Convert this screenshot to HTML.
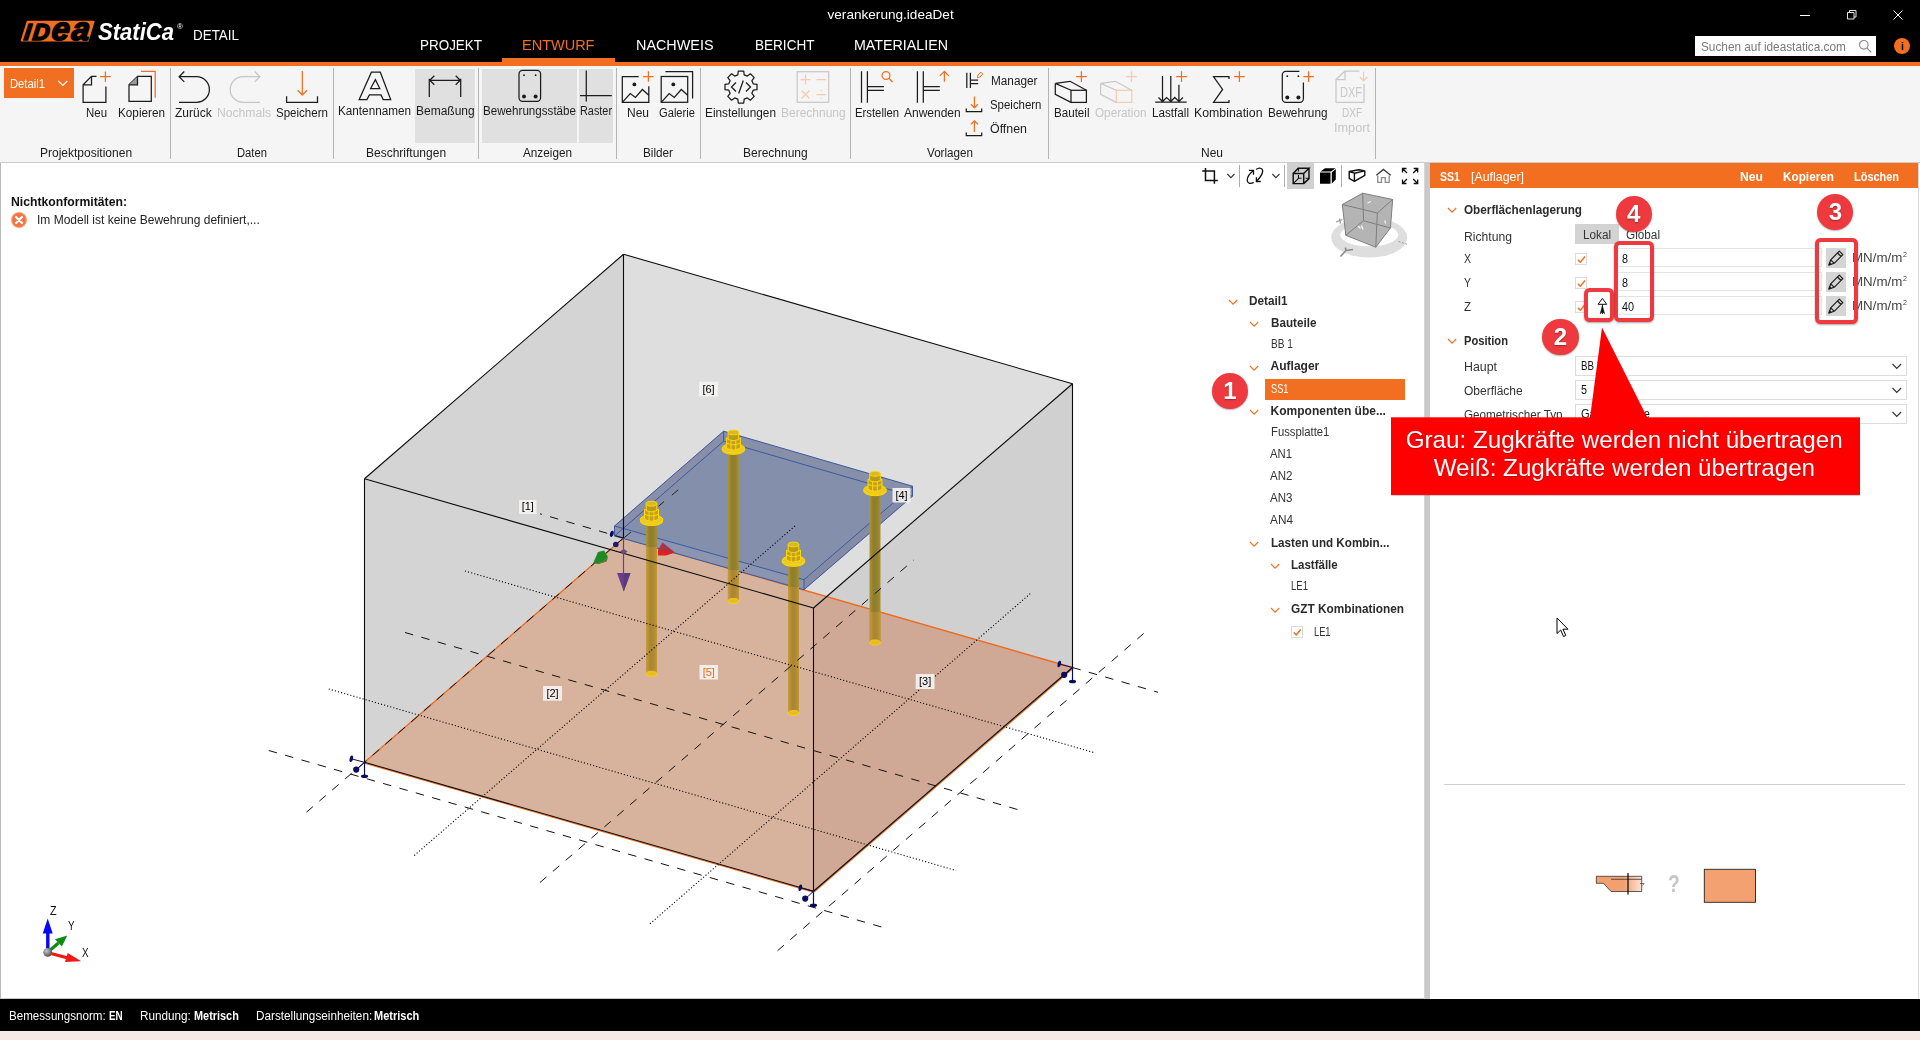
<!DOCTYPE html>
<html lang="de"><head><meta charset="utf-8"><title>verankerung.ideaDet</title>
<style>
html,body{margin:0;padding:0}
body{width:1920px;height:1040px;position:relative;overflow:hidden;background:#fff;font-family:"Liberation Sans",sans-serif;}
.t{position:absolute;white-space:nowrap;line-height:1;transform-origin:0 0;}
.b{position:absolute;}
svg{position:absolute;overflow:visible}
.L{position:absolute;left:0;top:0;width:1920px;height:1040px;}
.X{will-change:transform;}
</style></head>
<body>
<div class="L" id="s0">
<div class="b" style="left:0px;top:0px;width:1920px;height:62px;background:#000;"></div>
<div class="b" style="left:0px;top:62px;width:1920px;height:4px;background:#f26f21;"></div>
<div class="b" style="left:0px;top:66px;width:1920px;height:96px;background:#f5f5f5;"></div>
<div class="b" style="left:0px;top:162px;width:1920px;height:1px;background:#c9cdd0;"></div>
<div class="b" style="left:502px;top:58px;width:113px;height:4px;background:#f26f21;"></div>
<svg style="left:0;top:0" width="200" height="62" viewBox="0 0 200 62"><polygon points="27.500,21.600 93.800,21.600 88,40.800 21.500,40.800" fill="#f26f21" stroke="#f26f21" stroke-width="1.600" stroke-linejoin="round"/><text x="23.600" y="39.700" font-family="Liberation Sans, sans-serif" font-weight="bold" font-style="italic" fill="#000" stroke="#000" stroke-width="1.700" stroke-linejoin="round" textLength="65" lengthAdjust="spacing" transform="skewX(-7) translate(4.900 0)"><tspan font-size="23.200">ID</tspan><tspan font-size="32.200">ea</tspan></text></svg>
<svg style="left:1790px;top:0" width="130" height="32" viewBox="0 0 130 32" fill="none" stroke="#fff" stroke-width="1"><path d="M10 15.5h10"/><path d="M57.5 12.500h6.500v6.500h-6.500z M59.500 12.500v-2h6.500v6.500h-2" stroke="#e8e8e8"/><path d="M103.5 10.5l9 9M112.500 10.500l-9 9"/></svg>
<div class="b" style="left:1695px;top:36px;width:181px;height:20px;background:#fff;"></div>
<svg style="left:1857px;top:38px" width="16" height="16" viewBox="0 0 16 16" fill="none" stroke="#8a8a8a" stroke-width="1.1"><circle cx="6.8" cy="6.8" r="4.3"/><path d="M10 10l4.300 4.300"/></svg>
<div class="b" style="left:1894px;top:38px;width:16px;height:16px;border-radius:50%;background:#f26f21"></div>
<div class="b" style="left:0px;top:999px;width:1920px;height:32px;background:#000;"></div>
<div class="b" style="left:0px;top:1031px;width:1920px;height:9px;background:#f6ebe4;"></div>
<div class="b" style="left:415px;top:69px;width:60px;height:74px;background:#e0e0e0;"></div>
<div class="b" style="left:482px;top:69px;width:95px;height:74px;background:#e0e0e0;"></div>
<div class="b" style="left:579px;top:69px;width:34px;height:74px;background:#e0e0e0;"></div>
<div class="b" style="left:170px;top:68px;width:1px;height:91px;background:#b4b4b4;"></div>
<div class="b" style="left:333px;top:68px;width:1px;height:91px;background:#b4b4b4;"></div>
<div class="b" style="left:478px;top:68px;width:1px;height:91px;background:#b4b4b4;"></div>
<div class="b" style="left:616px;top:68px;width:1px;height:91px;background:#b4b4b4;"></div>
<div class="b" style="left:700px;top:68px;width:1px;height:91px;background:#b4b4b4;"></div>
<div class="b" style="left:850px;top:68px;width:1px;height:91px;background:#b4b4b4;"></div>
<div class="b" style="left:1048px;top:68px;width:1px;height:91px;background:#b4b4b4;"></div>
<div class="b" style="left:1375px;top:68px;width:1px;height:91px;background:#b4b4b4;"></div>
<div class="b" style="left:4px;top:68px;width:70px;height:30px;background:#f26f21;"></div>
<svg style="left:56px;top:78px" width="14" height="10" viewBox="0 0 14 10" fill="none" stroke="#fff" stroke-width="1.2"><path d="M2.3 3l4.500 4.500l4.500 -4.500"/></svg>
<svg style="left:0;top:0" width="1400" height="162" viewBox="0 0 1400 162" fill="none" stroke="#1c1c1c" stroke-width="1.25" stroke-linejoin="miter"><path d="M96.5 76.400H91.500L83.100 84.800V102.300H105.900V86.500M83.100 84.800H91.500V76.400"/><path d="M100.10000000000001 76.7H110.7M105.4 71.4V82.0" stroke="#f26f21"/><path d="M137.500 76.400L129 84.800V101.300H151.300V76.400Z"/><path d="M129 84.800H137.500V76.400Z" fill="#9a9a9a" stroke="none"/><path d="M129 84.800H137.500V76.400"/><path d="M141 71.300H155.200V97.800" stroke="#f26f21"/><path d="M179.300 76.700H196.600A12.800 12.800 0 0 1 196.600 102.300H179M184.300 71.500L179.100 76.700L184.300 81.900"/><path d="M259.700 76.700H243A12.800 12.800 0 0 0 243 102.300H260M254.700 71.500L259.900 76.700L254.700 81.900" stroke="#c6c6c6"/><path d="M286.600 96.300V102.300H317.500V96.300"/><path d="M302.300 71V95M297.600 90.300L302.300 95L307 90.300" stroke="#f26f21"/><path d="M359.200 99.600L371.400 72.200H380.300L390.700 99.600H383.200L381 94.900H369.400L366.900 99.600Z M375.400 79.600L370.600 88.500H379.800Z"/><path d="M429.300 78.800V97M460.700 78.800V97M429.800 80.300H460.200M434.300 75.800L429.800 80.300L434.300 84.800M455.700 75.800L460.200 80.300L455.700 84.800"/><rect x="519" y="70.4" width="21.600000000000023" height="31.0" rx="3.6"/><g fill="#1c1c1c" stroke="none"><circle cx="524.0" cy="75.2" r="0.9"/><circle cx="535.6" cy="75.2" r="0.9"/><circle cx="524.0" cy="96.60000000000001" r="2"/><circle cx="535.6" cy="96.60000000000001" r="2"/></g><path d="M586.300 70.400V101.400M580 95.500H611.800"/><path d="M638.5999999999999 76.500H622.3V102.300H648.8V86.300"/><path d="M622.3 102.300L630.3 93.600L635.4 97.400L642.4 89.500L648.8 95.300"/><circle cx="634.4" cy="84.400" r="1.9" fill="#1c1c1c" stroke="none"/><path d="M643.1 76.5H653.6999999999999M648.4 71.2V81.8" stroke="#f26f21"/><rect x="661.2" y="76.500" width="26.500" height="25.800"/><path d="M661.2 102.300L669.2 93.600L674.3000000000001 97.400L681.3000000000001 89.500L687.7 95.300"/><circle cx="673.3000000000001" cy="84.400" r="1.9" fill="#1c1c1c" stroke="none"/><path d="M665.400 71.700H692.600V98.500"/><path d="M737.8 74.8L738.3 71.0L743.7 71.0L744.2 74.8L747.3 76.1L750.4 73.8L754.2 77.6L751.9 80.7L753.2 83.8L757.0 84.3L757.0 89.7L753.2 90.2L751.9 93.3L754.2 96.4L750.4 100.2L747.3 97.9L744.2 99.2L743.7 103.0L738.3 103.0L737.8 99.2L734.7 97.9L731.6 100.2L727.8 96.4L730.1 93.3L728.8 90.2L725.0 89.7L725.0 84.3L728.8 83.8L730.1 80.7L727.8 77.6L731.6 73.8L734.7 76.1Z" stroke-linejoin="round"/><path d="M736 82.500L731.500 87L736 91.500M746 82.500L750.500 87L746 91.500M743.300 80.500L738.700 93.500"/><rect x="797.200" y="71.700" width="31.500" height="30.600" stroke="#c9c9c9"/><path d="M800.500 79.600H810.500M805.500 74.600V84.600M816.500 79.600H826M801.500 90.500L809.500 98.500M809.500 90.500L801.500 98.500M816.500 94.500H826M821.200 90V91M821.200 98V99" stroke="#f9c9ad"/><path d="M861.5 71.200V102.800M867.4 71.200V102.800M867.4 86.500H883.9M867.4 90.300H883.9"/><circle cx="886" cy="75.500" r="3.900" stroke="#f26f21"/><path d="M888.800 78.300L892.600 82" stroke="#f26f21"/><path d="M917.4 71.200V102.800M923.3 71.200V102.800M923.3 86.500H939.8M923.3 90.300H939.8"/><path d="M944.400 71.400V81.700M939.900 75.900L944.400 71.400L948.900 75.900" stroke="#f26f21"/><path d="M966.800 72.700V87.900M970.400 72.700V87.900M970.400 80.100H978.200M970.400 83.700H978.200"/><path d="M977.300 77.600L978 74.800L981 72.200L982.800 74L980 77Z" stroke="#f26f21" stroke-width="1"/><path d="M966.300 108.400V111.500H981.700V108.400"/><path d="M974.400 96.400V107.800M970.900 104.300L974.400 107.800L977.900 104.300" stroke="#f26f21"/><path d="M966.300 132.500V135.700H981.700V132.500"/><path d="M974.400 132V120.800M970.900 124.300L974.400 120.800L977.900 124.300" stroke="#f26f21"/><path d="M1055.3 83.400L1070.1 81.300L1086.3999999999999 90.300M1055.3 83.400V94.300L1071.0 102.400M1055.3 83.400L1071.0 90.300" stroke="#1c1c1c"/><rect x="1071.0" y="90.300" width="15.400" height="12.100" stroke="#1c1c1c"/><path d="M1076.1000000000001 76.6H1086.7M1081.4 71.3V81.89999999999999" stroke="#f26f21"/><path d="M1100.6 83.400L1115.3999999999999 81.300L1131.6999999999998 90.300M1100.6 83.400V94.300L1116.3 102.400M1100.6 83.400L1116.3 90.300" stroke="#c9c9c9"/><rect x="1116.3" y="90.300" width="15.400" height="12.100" stroke="#f9c9ad"/><path d="M1126.2 76.6H1136.8M1131.5 71.3V81.89999999999999" stroke="#f9c9ad"/><path d="M1155.200 102H1186.700M1162.500 76.100V101.500M1170.800 76.100V101.500M1178.900 84.800V101.500M1158.500 97.500L1162.500 101.500L1166.600 97.500L1170.800 101.500L1174.800 97.500L1178.900 101.500L1183 97.500"/><path d="M1176.2 76.6H1186.8M1181.5 71.3V81.89999999999999" stroke="#f26f21"/><path d="M1229 79V76.500H1213.500L1222.600 89.400L1213.500 102.400H1229V100"/><path d="M1234.1000000000001 76.6H1244.7M1239.4 71.3V81.89999999999999" stroke="#f26f21"/><path d="M1299.4 71.4H1285.8999999999999a3.600 3.600 0 0 0 -3.600 3.600V98.80000000000001a3.600 3.600 0 0 0 3.600 3.600H1299.8000000000002a3.600 3.600 0 0 0 3.600 -3.600V82.4"/><g fill="#1c1c1c" stroke="none"><circle cx="1287.3" cy="76.2" r="0.9"/><circle cx="1298.4" cy="76.2" r="0.9"/><circle cx="1287.3" cy="97.60000000000001" r="2"/><circle cx="1298.4" cy="97.60000000000001" r="2"/></g><path d="M1303.3 76.6H1313.8999999999999M1308.6 71.3V81.89999999999999" stroke="#f26f21"/><path d="M1345 71H1359.500M1345 71L1336 79.500V102.400H1364V84M1336 79.500H1345V71" stroke="#c9c9c9"/><path d="M1363.600 71.500V80.500M1359.800 77L1363.600 80.800L1367.400 77" stroke="#f9c9ad"/></svg>
<div class="b" style="left:0px;top:163px;width:1px;height:836px;background:#b9b9b9;"></div>
<div class="b" style="left:0px;top:998px;width:1424px;height:1px;background:#c8c8c8;"></div>
<div class="b" style="left:1424px;top:163px;width:6px;height:836px;background:#c9c9c9;"></div>
<div class="b" style="left:1424px;top:163px;width:1px;height:836px;background:#d6d6d6;"></div>
<svg style="left:10px;top:211px" width="18" height="18" viewBox="0 0 18 18"><circle cx="9" cy="9" r="8" fill="#f8a682"/><circle cx="9" cy="9" r="6.900" fill="#f4733f"/><path d="M6 6l6 6M12 6l-6 6" stroke="#fff" stroke-width="2.300" stroke-linecap="round"/></svg>
<svg style="left:0;top:163px" width="1424" height="836" viewBox="0 163 1424 836"><defs><linearGradient id="gsh" x1="0" x2="1" y1="0" y2="0"><stop offset="0" stop-color="#ad9638"/><stop offset="0.35" stop-color="#8f7d2c"/><stop offset="0.7" stop-color="#93812e"/><stop offset="1" stop-color="#a69036"/></linearGradient><linearGradient id="gsh2" x1="0" x2="1" y1="0" y2="0"><stop offset="0" stop-color="#c39c3c"/><stop offset="0.4" stop-color="#a98530"/><stop offset="0.75" stop-color="#b08b33"/><stop offset="1" stop-color="#c29a3b"/></linearGradient><radialGradient id="gball" cx="0.38" cy="0.35" r="0.7"><stop offset="0" stop-color="#c8c8c8"/><stop offset="1" stop-color="#4a4a4a"/></radialGradient></defs><polygon points="364.50,478.75 623.50,254.25 623.50,538.00 364.50,762.30" fill="#d4d4d4"/><polygon points="623.50,254.25 1072.50,383.75 826.60,596.60 623.50,538.00" fill="#dedede"/><polygon points="1072.50,383.75 1072.50,667.50 826.60,596.60" fill="#d0d0d0"/><polygon points="623.50,538.00 826.60,596.60 813.50,608.00 813.50,891.25 364.50,762.30" fill="#d7b39d"/><polygon points="826.60,596.60 1072.50,667.50 813.50,891.25 813.50,608.00" fill="#cfa995"/><line x1="623.50" y1="538.00" x2="1072.50" y2="667.50" stroke="#ec6b1f" stroke-width="1.35"/><line x1="623.50" y1="538.00" x2="364.50" y2="762.30" stroke="#ec6b1f" stroke-width="1.35"/><line x1="364.50" y1="762.30" x2="813.50" y2="891.25" stroke="#ec6b1f" stroke-width="1.35" transform="translate(0,0.8)"/><line x1="813.50" y1="891.25" x2="1072.50" y2="667.50" stroke="#ec6b1f" stroke-width="1.35" transform="translate(0.8,0.5)"/><polygon points="723.60,431.20 912.50,486.20 912.50,496.20 804.00,589.70 614.50,536.00 614.50,526.00" fill="#8490ab"/><polygon points="614.50,526.00 804.00,579.70 804.00,589.70 614.50,536.00" fill="#8c95b0"/><polygon points="804.00,579.70 912.50,486.20 912.50,496.20 804.00,589.70" fill="#858ba4"/><polygon points="723.60,431.20 614.50,526.00 614.50,536.00 723.60,441.20" fill="#8b8fa6" opacity="0.7"/><polygon points="723.60,431.20 912.50,486.20 912.50,496.20 723.60,441.20" fill="#8b8fa6" opacity="0.45"/><polygon points="723.60,431.20 912.50,486.20 804.00,579.70 614.50,526.00" stroke="#3b5aa0" stroke-width="1" fill="none"/><polyline points="614.50,526.00 614.50,536.00 804.00,589.70 912.50,496.20 912.50,486.20" stroke="#3b5aa0" stroke-width="1" fill="none"/><line x1="804.00" y1="579.70" x2="804.00" y2="589.70" stroke="#3b5aa0" stroke-width="1" fill="none"/><line x1="723.60" y1="431.20" x2="723.60" y2="441.20" stroke="#3b5aa0" stroke-width="1" fill="none"/><polyline points="614.50,536.00 723.60,441.20 912.50,496.20" stroke="#3b5aa0" stroke-width="1" fill="none"/><rect x="727.9" y="446.5" width="11.0" height="154.5" fill="url(#gsh)"/><rect x="727.9" y="570" width="11.0" height="31" fill="url(#gsh2)"/><ellipse cx="733.4" cy="601" rx="5.5" ry="2.6" fill="#e8bd22" stroke="#ffd21a" stroke-width="0.8"/><ellipse cx="733.4" cy="449.8" rx="11.3" ry="4.6" fill="#e3c328" stroke="#ffd800" stroke-width="1" /><ellipse cx="733.4" cy="448.3" rx="11.3" ry="4.6" fill="#e8c92a" stroke="#ffd800" stroke-width="1" /><path d="M726.4 438.0V448.0Q733.4 452.0 740.4 448.0V438.0Q733.4 441.5 726.4 438.0Z" fill="#c2a11c" stroke="#ffd800" stroke-width="1" /><path d="M731.0 440.5V450.0M735.8 440.5V450.0M726.4 443.0Q733.4 446.5 740.4 443.0" fill="none" stroke="#ffd800" stroke-width="1" /><path d="M728.1 432.5V439.5Q733.4 442.0 738.6999999999999 439.5V432.5Z" fill="#b89a20" stroke="#ffd800" stroke-width="1" /><ellipse cx="733.4" cy="432.5" rx="5.300" ry="2.400" fill="#d9b92c" stroke="#ffd800" stroke-width="1" /><rect x="869.5" y="487.8" width="11.0" height="154.7" fill="url(#gsh)"/><rect x="869.5" y="612" width="11.0" height="30.5" fill="url(#gsh2)"/><ellipse cx="875" cy="642.5" rx="5.5" ry="2.6" fill="#e8bd22" stroke="#ffd21a" stroke-width="0.8"/><ellipse cx="875" cy="491.1" rx="11.3" ry="4.6" fill="#e3c328" stroke="#ffd800" stroke-width="1" /><ellipse cx="875" cy="489.6" rx="11.3" ry="4.6" fill="#e8c92a" stroke="#ffd800" stroke-width="1" /><path d="M868 479.3V489.3Q875 493.3 882 489.3V479.3Q875 482.8 868 479.3Z" fill="#c2a11c" stroke="#ffd800" stroke-width="1" /><path d="M872.6 481.8V491.3M877.4 481.8V491.3M868 484.3Q875 487.8 882 484.3" fill="none" stroke="#ffd800" stroke-width="1" /><path d="M869.7 473.8V480.8Q875 483.3 880.3 480.8V473.8Z" fill="#b89a20" stroke="#ffd800" stroke-width="1" /><ellipse cx="875" cy="473.8" rx="5.300" ry="2.400" fill="#d9b92c" stroke="#ffd800" stroke-width="1" /><rect x="646.0" y="517.7" width="11.0" height="156.09999999999997" fill="url(#gsh)"/><rect x="646.0" y="547" width="11.0" height="126.79999999999995" fill="url(#gsh2)"/><ellipse cx="651.5" cy="673.8" rx="5.5" ry="2.6" fill="#e8bd22" stroke="#ffd21a" stroke-width="0.8"/><ellipse cx="651.5" cy="521.0" rx="11.3" ry="4.6" fill="#e3c328" stroke="#ffd800" stroke-width="1" /><ellipse cx="651.5" cy="519.5" rx="11.3" ry="4.6" fill="#e8c92a" stroke="#ffd800" stroke-width="1" /><path d="M644.5 509.2V519.2Q651.5 523.2 658.5 519.2V509.2Q651.5 512.7 644.5 509.2Z" fill="#c2a11c" stroke="#ffd800" stroke-width="1" /><path d="M649.1 511.7V521.2M653.9 511.7V521.2M644.5 514.2Q651.5 517.7 658.5 514.2" fill="none" stroke="#ffd800" stroke-width="1" /><path d="M646.2 503.7V510.7Q651.5 513.2 656.8 510.7V503.7Z" fill="#b89a20" stroke="#ffd800" stroke-width="1" /><ellipse cx="651.5" cy="503.7" rx="5.300" ry="2.400" fill="#d9b92c" stroke="#ffd800" stroke-width="1" /><rect x="788.0" y="558.5" width="11.0" height="154.5" fill="url(#gsh)"/><rect x="788.0" y="587" width="11.0" height="126" fill="url(#gsh2)"/><ellipse cx="793.5" cy="713" rx="5.5" ry="2.6" fill="#e8bd22" stroke="#ffd21a" stroke-width="0.8"/><ellipse cx="793.5" cy="561.8" rx="11.3" ry="4.6" fill="#e3c328" stroke="#ffd800" stroke-width="1" /><ellipse cx="793.5" cy="560.3" rx="11.3" ry="4.6" fill="#e8c92a" stroke="#ffd800" stroke-width="1" /><path d="M786.5 550.0V560.0Q793.5 564.0 800.5 560.0V550.0Q793.5 553.5 786.5 550.0Z" fill="#c2a11c" stroke="#ffd800" stroke-width="1" /><path d="M791.1 552.5V562.0M795.9 552.5V562.0M786.5 555.0Q793.5 558.5 800.5 555.0" fill="none" stroke="#ffd800" stroke-width="1" /><path d="M788.2 544.5V551.5Q793.5 554.0 798.8 551.5V544.5Z" fill="#b89a20" stroke="#ffd800" stroke-width="1" /><ellipse cx="793.5" cy="544.5" rx="5.300" ry="2.400" fill="#d9b92c" stroke="#ffd800" stroke-width="1" /><line x1="465.00" y1="571.00" x2="1093.75" y2="752.50" stroke="#000" stroke-width="1.1" stroke-dasharray="1.1 2.1"/><line x1="328.75" y1="689.00" x2="956.00" y2="870.50" stroke="#000" stroke-width="1.1" stroke-dasharray="1.1 2.1"/><line x1="414.25" y1="855.50" x2="795.00" y2="526.00" stroke="#000" stroke-width="1.1" stroke-dasharray="1.1 2.1"/><line x1="650.00" y1="923.75" x2="1031.00" y2="593.00" stroke="#000" stroke-width="1.1" stroke-dasharray="1.1 2.1"/><line x1="405.00" y1="632.50" x2="1021.00" y2="810.50" stroke="#111" stroke-width="1" stroke-dasharray="8.5 8.5"/><line x1="540.00" y1="882.50" x2="913.75" y2="560.00" stroke="#111" stroke-width="1" stroke-dasharray="8.5 8.5"/><line x1="268.75" y1="750.50" x2="885.00" y2="928.00" stroke="#111" stroke-width="1" stroke-dasharray="8.5 8.5"/><line x1="777.50" y1="950.75" x2="1150.00" y2="628.00" stroke="#111" stroke-width="1" stroke-dasharray="8.5 8.5"/><line x1="1072.50" y1="667.50" x2="1158.00" y2="692.30" stroke="#111" stroke-width="1" stroke-dasharray="8.5 8.5"/><line x1="364.50" y1="762.30" x2="303.75" y2="814.50" stroke="#111" stroke-width="1" stroke-dasharray="8.5 8.5"/><line x1="623.50" y1="538.00" x2="540.00" y2="513.80" stroke="#111" stroke-width="1" stroke-dasharray="8.5 8.5"/><line x1="623.50" y1="538.00" x2="364.50" y2="762.30" stroke="#111" stroke-width="1" stroke-dasharray="9 8"/><line x1="624.40" y1="537.50" x2="631.00" y2="532.00" stroke="#222" stroke-width="1"/><line x1="658.50" y1="506.30" x2="664.00" y2="501.60" stroke="#222" stroke-width="1"/><line x1="671.80" y1="495.20" x2="678.20" y2="489.80" stroke="#222" stroke-width="1"/><line x1="364.50" y1="478.75" x2="623.50" y2="254.25" stroke="#0a0a0a" stroke-width="1.1"/><line x1="623.50" y1="254.25" x2="1072.50" y2="383.75" stroke="#0a0a0a" stroke-width="1.1"/><line x1="1072.50" y1="383.75" x2="1072.50" y2="667.50" stroke="#0a0a0a" stroke-width="1.1"/><line x1="364.50" y1="478.75" x2="364.50" y2="762.30" stroke="#0a0a0a" stroke-width="1.1"/><line x1="623.50" y1="254.25" x2="623.50" y2="538.00" stroke="#0a0a0a" stroke-width="1.1"/><line x1="364.50" y1="478.75" x2="813.50" y2="608.00" stroke="#0a0a0a" stroke-width="1.1"/><line x1="813.50" y1="608.00" x2="1072.50" y2="383.75" stroke="#0a0a0a" stroke-width="1.1"/><line x1="813.50" y1="608.00" x2="813.50" y2="891.25" stroke="#0a0a0a" stroke-width="1.1"/><line x1="364.50" y1="762.30" x2="813.50" y2="891.25" stroke="#0a0a0a" stroke-width="1.1"/><line x1="813.50" y1="891.25" x2="1072.50" y2="667.50" stroke="#0a0a0a" stroke-width="1.1"/><line x1="623.500" y1="538" x2="623.500" y2="574" stroke="#6b3d8f" stroke-width="1.2"/><polygon points="617,573 630.500,573 623.750,591.500" fill="#6a3f93"/><polygon points="623.750,573 630.500,573 623.750,591.500" fill="#5b3a78"/><polygon points="619.800,551.500 623.750,549 627.700,551.500 623.750,554" fill="#6e4a86"/><polygon points="593,563.500 598,552 604,550.500 608,557 602,562.500" fill="#1f8a24"/><polygon points="593,563.500 602,562.500 608,557 606.500,561.500 599,564" fill="#5a6b2a"/><polygon points="658.500,555 658.500,549 662.500,542.500 675,552.500 666,555" fill="#a8324a"/><polygon points="658,549.500 675,552.500 666,555.500 658,555.500" fill="#e02020"/><line x1="364.5" y1="762.3" x2="364.5" y2="775.8" stroke="#0b0b5e" stroke-width="1.2"/><ellipse cx="364.5" cy="776.3" rx="3.600" ry="1.800" fill="#0b0b5e"/><line x1="364.5" y1="762.3" x2="357.5" y2="768.8" stroke="#0b0b5e" stroke-width="1"/><circle cx="356.2" cy="769.5999999999999" r="3.100" fill="#0b0b5e"/><line x1="364.5" y1="762.3" x2="352.5" y2="759.0999999999999" stroke="#0b0b5e" stroke-width="1"/><ellipse cx="351.3" cy="758.8" rx="1.700" ry="3.300" fill="#0b0b5e" transform="rotate(12 351.3 758.8)"/><line x1="813.5" y1="891.25" x2="813.5" y2="904.75" stroke="#0b0b5e" stroke-width="1.2"/><ellipse cx="813.5" cy="905.25" rx="3.600" ry="1.800" fill="#0b0b5e"/><line x1="813.5" y1="891.25" x2="806.5" y2="897.75" stroke="#0b0b5e" stroke-width="1"/><circle cx="805.2" cy="898.55" r="3.100" fill="#0b0b5e"/><line x1="813.5" y1="891.25" x2="801.5" y2="888.05" stroke="#0b0b5e" stroke-width="1"/><ellipse cx="800.3" cy="887.75" rx="1.700" ry="3.300" fill="#0b0b5e" transform="rotate(12 800.3 887.75)"/><line x1="1072.5" y1="667.5" x2="1072.5" y2="681.0" stroke="#0b0b5e" stroke-width="1.2"/><ellipse cx="1072.5" cy="681.5" rx="3.600" ry="1.800" fill="#0b0b5e"/><line x1="1072.5" y1="667.5" x2="1065.5" y2="674.0" stroke="#0b0b5e" stroke-width="1"/><circle cx="1064.2" cy="674.8" r="3.100" fill="#0b0b5e"/><line x1="1072.5" y1="667.5" x2="1060.5" y2="664.3" stroke="#0b0b5e" stroke-width="1"/><ellipse cx="1059.3" cy="664.0" rx="1.700" ry="3.300" fill="#0b0b5e" transform="rotate(12 1059.3 664.0)"/><ellipse cx="611.800" cy="533.800" rx="1.800" ry="3.200" fill="#0b0b5e" transform="rotate(15 611.800 533.800)"/><circle cx="615.800" cy="544.500" r="2.800" fill="#1a1a6e"/><rect x="519" y="500" width="17.5" height="14" fill="#f4f2f0" opacity="0.92"/><rect x="543" y="686" width="19" height="14.700000000000045" fill="#f4f2f0" opacity="0.92"/><rect x="915.7" y="674" width="18.799999999999955" height="15" fill="#f4f2f0" opacity="0.92"/><rect x="892.5" y="488" width="18.0" height="14.5" fill="#f4f2f0" opacity="0.92"/><rect x="699.5" y="665" width="18.5" height="14.5" fill="#f4f2f0" opacity="0.92"/><rect x="699" y="381.7" width="19" height="15.0" fill="#f4f2f0" opacity="0.92"/><rect x="46.100" y="932" width="3.400" height="19" fill="#0808f5"/><polygon points="42.700,933.500 52.700,933.500 47.700,918.500" fill="#0808f5"/><line x1="48.500" y1="951.500" x2="58.500" y2="943" stroke="#0c8c10" stroke-width="3.200"/><polygon points="67.300,935.400 55,939.200 61.900,946.500" fill="#0c8c10"/><line x1="49" y1="953" x2="67" y2="957.700" stroke="#f51616" stroke-width="3.200"/><polygon points="81.200,961.200 67.700,952.900 65,962" fill="#f51616"/><circle cx="47.700" cy="952.300" r="4.400" fill="url(#gball)"/><ellipse cx="1369.200" cy="237.500" rx="38" ry="20.100" fill="#dedede"/><ellipse cx="1369.200" cy="234.800" rx="29" ry="11.500" fill="#fff"/><polygon points="1342.30,204.50 1362.70,193.20 1392.70,199.50 1390.40,228.00 1375.80,247.20 1345.80,235.30" fill="#b1b1b1" opacity="0.96"/><polygon points="1342.30,204.50 1362.70,193.20 1392.70,199.50 1377.30,213.00" stroke="#7e7e7e" stroke-width="1" fill="none"/><polyline points="1342.30,204.50 1345.80,235.30 1375.80,247.20 1390.40,228.00 1392.70,199.50" stroke="#7e7e7e" stroke-width="1" fill="none"/><line x1="1377.30" y1="213.00" x2="1375.80" y2="247.20" stroke="#7e7e7e" stroke-width="1" fill="none"/><line x1="1362.70" y1="193.20" x2="1363.50" y2="220.70" stroke="#7e7e7e" stroke-width="1" fill="none"/><line x1="1363.50" y1="220.70" x2="1345.80" y2="235.30" stroke="#7e7e7e" stroke-width="1" fill="none"/><line x1="1363.50" y1="220.70" x2="1390.40" y2="228.00" stroke="#7e7e7e" stroke-width="1" fill="none"/><path d="M1340.500,256.500L1346,250.500M1346,250.500L1345.300,247.500M1346,250.500L1353,249.500" stroke="#8a8a8a" stroke-width="1.600" fill="none"/><path d="M1336,222L1342.500,219.500M1339.500,218.500L1340.500,223.500" stroke="#9a9a9a" stroke-width="1.300"/><path d="M1398.500,241.500L1408,244.500" stroke="#9a9a9a" stroke-width="1" stroke-dasharray="2 1.500"/><path d="M1367.500,203L1371,201.500M1358,226L1360.500,228.500M1361.500,225.500L1363,229.500M1385,220.500L1385.500,223.500" stroke="#f4f4f4" stroke-width="1.300"/></svg>
<div class="b" style="left:1287px;top:163px;width:27px;height:26px;background:#d0d0d0;"></div>
<div class="b" style="left:1239px;top:165px;width:1px;height:22px;background:#adadad;"></div>
<div class="b" style="left:1284px;top:165px;width:1px;height:22px;background:#adadad;"></div>
<div class="b" style="left:1341px;top:165px;width:1px;height:22px;background:#adadad;"></div>
<svg style="left:1195px;top:163px" width="230" height="27" viewBox="1195 163 230 27" fill="none" stroke="#111" stroke-width="1.300"><path d="M1202.200 171.100H1214.400V183.700M1205.500 168.100V180.600H1217.800" stroke-width="1.500"/><path d="M1227.300 174L1230.900 177.600L1234.500 174" stroke="#333" stroke-width="1.100"/><path d="M1272.300 174L1275.900 177.600L1279.500 174" stroke="#333" stroke-width="1.100"/><path d="M1249 170.400H1253.500V174.700M1253.500 170.400C1250 173 1247.300 177 1247.200 180C1247.200 183.200 1250 184.400 1253.700 182.400"/><path d="M1256.100 169.500C1258 168 1261 167.500 1262.300 169.500C1263.600 171.500 1261.500 176.500 1256.400 181.500M1256.400 177.200V181.500H1260.800"/><path d="M1293.200 173.500H1303.700V183.600H1293.200ZM1293.200 173.500L1298.200 168.300H1309L1303.700 173.500M1309 168.300V178.600L1303.700 183.600" stroke-width="1.450"/><path d="M1298.500 168.300V171.500M1298.500 175V178.300H1301.500M1305.500 178.300H1309M1298.500 178.300L1293.200 183.600" stroke-width="1.100"/><path d="M1320 172.500H1330.500V183.700H1320Z M1320.500 171.500L1325 168.300H1335.500L1331 171.500Z M1331.800 172.500L1335.800 169V179.500L1331.800 183.500Z" fill="#000" stroke="none"/><path d="M1349.200 171.500L1354.400 173.200L1364.800 170.900L1359 169.800ZM1349.200 171.500V178.400L1354.400 181.300V173.200M1354.400 181.300L1364.800 175.300V170.900" stroke-width="1.400" stroke-linejoin="round"/><path d="M1377.750 175.500V182.400H1381.500V177.600H1385.250V182.400H1389.200V175.500" stroke="#8c8c8c" stroke-width="1.300"/><path d="M1376.300 175.200L1383.400 169.400L1390.700 175.200" stroke="#3c3c3c" stroke-width="1.300"/><path d="M1402.500 168.500L1407 173M1402.500 172.500V168.500H1406.500M1417.700 168.500L1413.200 173M1413.700 168.500H1417.700V172.500M1402.500 183.500L1407 179M1402.500 179.500V183.500H1406.500M1417.700 183.500L1413.200 179M1413.700 183.500H1417.700V179.500" stroke-width="1.300"/></svg>
<div class="b" style="left:1265px;top:379px;width:140px;height:21px;background:#f26f21;"></div>
<svg style="left:1227.8px;top:297.75px" width="11" height="8" viewBox="0 0 11 8" fill="none" stroke="#f26f21" stroke-width="1.100"><path d="M1 2l4.100 4.200l4.100 -4.200"/></svg>
<svg style="left:1249px;top:319.90px" width="11" height="8" viewBox="0 0 11 8" fill="none" stroke="#f26f21" stroke-width="1.100"><path d="M1 2l4.100 4.200l4.100 -4.200"/></svg>
<svg style="left:1249px;top:363.60px" width="11" height="8" viewBox="0 0 11 8" fill="none" stroke="#f26f21" stroke-width="1.100"><path d="M1 2l4.100 4.200l4.100 -4.200"/></svg>
<svg style="left:1249px;top:407.75px" width="11" height="8" viewBox="0 0 11 8" fill="none" stroke="#f26f21" stroke-width="1.100"><path d="M1 2l4.100 4.200l4.100 -4.200"/></svg>
<svg style="left:1249px;top:539.90px" width="11" height="8" viewBox="0 0 11 8" fill="none" stroke="#f26f21" stroke-width="1.100"><path d="M1 2l4.100 4.200l4.100 -4.200"/></svg>
<svg style="left:1270px;top:561.75px" width="11" height="8" viewBox="0 0 11 8" fill="none" stroke="#f26f21" stroke-width="1.100"><path d="M1 2l4.100 4.200l4.100 -4.200"/></svg>
<svg style="left:1270px;top:605.90px" width="11" height="8" viewBox="0 0 11 8" fill="none" stroke="#f26f21" stroke-width="1.100"><path d="M1 2l4.100 4.200l4.100 -4.200"/></svg>
<div class="b" style="left:1291px;top:626px;width:9.700px;height:9.700px;border:1px solid #dcdcdc;background:#fff;box-sizing:content-box"></div>
<svg style="left:1291px;top:626px" width="13" height="13" viewBox="0 0 13 13" fill="none" stroke="#f26f21" stroke-width="1.500"><path d="M2.700 6.500l2.500 2.300l4.500 -5.300"/></svg>
<div class="b" style="left:1430px;top:163px;width:488px;height:25px;background:#f26f21;"></div>
<div class="b" style="left:1918px;top:163px;width:1px;height:836px;background:#d9d9d9;"></div>
<svg style="left:1446.5px;top:205.5px" width="11" height="8" viewBox="0 0 11 8" fill="none" stroke="#f26f21" stroke-width="1.100"><path d="M1 2l4.100 4.200l4.100 -4.200"/></svg>
<div class="b" style="left:1575px;top:224px;width:44px;height:20px;background:#d3d3d3;"></div>
<div class="b" style="left:1575px;top:253.2px;width:9.5px;height:9.5px;border:1px solid #dcdcdc;background:#fff"></div>
<svg style="left:1575px;top:253.0px" width="13" height="13" viewBox="0 0 13 13" fill="none" stroke="#f26f21" stroke-width="1.500"><path d="M2.800 6.800l2.500 2.400l4.700 -5.600"/></svg>
<div class="b" style="left:1616px;top:248.0px;width:205.500px;height:19px;border:1px solid #e3e3e3;background:#fff;box-sizing:border-box"></div>
<div class="b" style="left:1826px;top:248.2px;width:20px;height:19.600000000000023px;background:#d5d5d5;"></div>
<svg style="left:1826px;top:248.2px" width="20" height="20" viewBox="0 0 20 20" fill="none" stroke="#1a1a1a" stroke-width="1.200" stroke-linejoin="round"><path d="M3 17l1.700 -5.200l8.600 -8.600l3.500 3.500l-8.600 8.600zM4.700 11.800l3.500 3.500M11.500 5l3.500 3.500"/><path d="M3 17l0.700 -2.100l1.400 1.400z" fill="#1a1a1a"/></svg>
<div class="b" style="left:1575px;top:277.2px;width:9.5px;height:9.5px;border:1px solid #dcdcdc;background:#fff"></div>
<svg style="left:1575px;top:277.0px" width="13" height="13" viewBox="0 0 13 13" fill="none" stroke="#f26f21" stroke-width="1.500"><path d="M2.800 6.800l2.500 2.400l4.700 -5.600"/></svg>
<div class="b" style="left:1616px;top:272.0px;width:205.500px;height:19px;border:1px solid #e3e3e3;background:#fff;box-sizing:border-box"></div>
<div class="b" style="left:1826px;top:272.2px;width:20px;height:19.600000000000023px;background:#d5d5d5;"></div>
<svg style="left:1826px;top:272.2px" width="20" height="20" viewBox="0 0 20 20" fill="none" stroke="#1a1a1a" stroke-width="1.200" stroke-linejoin="round"><path d="M3 17l1.700 -5.200l8.600 -8.600l3.500 3.500l-8.600 8.600zM4.700 11.800l3.500 3.500M11.500 5l3.500 3.500"/><path d="M3 17l0.700 -2.100l1.400 1.400z" fill="#1a1a1a"/></svg>
<div class="b" style="left:1575px;top:301.2px;width:9.5px;height:9.5px;border:1px solid #dcdcdc;background:#fff"></div>
<svg style="left:1575px;top:301.0px" width="13" height="13" viewBox="0 0 13 13" fill="none" stroke="#f26f21" stroke-width="1.500"><path d="M2.800 6.800l2.500 2.400l4.700 -5.600"/></svg>
<div class="b" style="left:1616px;top:296.0px;width:205.500px;height:19px;border:1px solid #e3e3e3;background:#fff;box-sizing:border-box"></div>
<div class="b" style="left:1826px;top:296.2px;width:20px;height:19.600000000000023px;background:#d5d5d5;"></div>
<svg style="left:1826px;top:296.2px" width="20" height="20" viewBox="0 0 20 20" fill="none" stroke="#1a1a1a" stroke-width="1.200" stroke-linejoin="round"><path d="M3 17l1.700 -5.200l8.600 -8.600l3.500 3.500l-8.600 8.600zM4.700 11.800l3.500 3.500M11.500 5l3.500 3.500"/><path d="M3 17l0.700 -2.100l1.400 1.400z" fill="#1a1a1a"/></svg>
<svg style="left:1594px;top:296px" width="18" height="20" viewBox="1594 296 18 20" fill="none" stroke="#111" stroke-width="1"><path d="M1602.400 298.400L1598.100 304.300H1606.700ZM1602.400 304.300V314"/><path d="M1602.400 305.800L1600.200 313.800L1602.400 311.800L1604.600 313.800Z" fill="#111" stroke-width="0.600"/></svg>
<svg style="left:1446.5px;top:337px" width="11" height="8" viewBox="0 0 11 8" fill="none" stroke="#f26f21" stroke-width="1.100"><path d="M1 2l4.100 4.200l4.100 -4.200"/></svg>
<div class="b" style="left:1575px;top:356px;width:332px;height:20px;border:1px solid #dcdcdc;background:#fff;box-sizing:border-box"></div>
<svg style="left:1891px;top:362px" width="12" height="9" viewBox="0 0 12 9" fill="none" stroke="#333" stroke-width="1.200"><path d="M1.500 2l4.300 4.300l4.300 -4.300"/></svg>
<div class="b" style="left:1575px;top:380px;width:332px;height:20px;border:1px solid #dcdcdc;background:#fff;box-sizing:border-box"></div>
<svg style="left:1891px;top:386px" width="12" height="9" viewBox="0 0 12 9" fill="none" stroke="#333" stroke-width="1.200"><path d="M1.500 2l4.300 4.300l4.300 -4.300"/></svg>
<div class="b" style="left:1575px;top:404px;width:332px;height:20px;border:1px solid #dcdcdc;background:#fff;box-sizing:border-box"></div>
<svg style="left:1891px;top:410px" width="12" height="9" viewBox="0 0 12 9" fill="none" stroke="#333" stroke-width="1.200"><path d="M1.500 2l4.300 4.300l4.300 -4.300"/></svg>
<div class="b" style="left:1444px;top:784px;width:461px;height:1px;background:#d0d0d0;"></div>
<svg style="left:1590px;top:865px" width="180" height="45" viewBox="1590 865 180 45"><defs><linearGradient id="gpv" x1="0" x2="1"><stop offset="0" stop-color="#f3a071"/><stop offset="0.6" stop-color="#f3a071"/><stop offset="1" stop-color="#fbe3d6"/></linearGradient></defs><path d="M1596.300 876.300H1641.700V891.500H1611L1603.500 883.300H1596.300Z" fill="url(#gpv)" stroke="#333" stroke-width="0.800"/><path d="M1611 879.300H1641.700" stroke="#333" stroke-width="0.800"/><path d="M1628 873V894.500" stroke="#111" stroke-width="1.300"/><path d="M1640 883.500h4l-1.300 2" stroke="#444" stroke-width="0.700" fill="none"/><rect x="1704.300" y="869.300" width="51.200" height="33" fill="#f4a171" stroke="#222" stroke-width="0.900"/></svg>
</div>
<div class="L X" id="t{i}">
<span class="t" style="left:827.50px;top:8.19px;font-size:13.6px;color:#fff;">verankerung.ideaDet</span>
<span class="t" style="left:420.00px;top:38.47px;font-size:14.8px;color:#fff;transform:scaleX(0.9087);">PROJEKT</span>
<span class="t" style="left:522.00px;top:38.47px;font-size:14.8px;color:#f26f21;transform:scaleX(0.9797);">ENTWURF</span>
<span class="t" style="left:635.50px;top:38.47px;font-size:14.8px;color:#fff;transform:scaleX(0.9715);">NACHWEIS</span>
<span class="t" style="left:754.50px;top:38.47px;font-size:14.8px;color:#fff;transform:scaleX(0.9158);">BERICHT</span>
<span class="t" style="left:854.00px;top:38.47px;font-size:14.8px;color:#fff;transform:scaleX(0.9631);">MATERIALIEN</span>
<span class="t" style="left:98.00px;top:21.36px;font-size:23.2px;color:#fff;transform:scaleX(0.9509);font-weight:bold;font-style:italic;">StatiCa</span>
<span class="t" style="left:177.00px;top:23.23px;font-size:8px;color:#fff;transform:scaleX(1.0204);">®</span>
<span class="t" style="left:193.00px;top:27.64px;font-size:14.6px;color:#fff;transform:scaleX(0.9199);">DETAIL</span>
<span class="t" style="left:1701.00px;top:40.67px;font-size:12.2px;color:#7a7a7a;transform:scaleX(0.9675);">Suchen auf ideastatica.com</span>
<span class="t" style="left:1900.50px;top:41.27px;font-size:11.5px;color:#000;transform:scaleX(0.9317);font-weight:bold;">i</span>
<span class="t" style="left:8.50px;top:1009.84px;font-size:12px;color:#fff;transform:scaleX(0.9668);">Bemessungsnorm:</span>
<span class="t" style="left:108.70px;top:1009.84px;font-size:12px;color:#fff;transform:scaleX(0.8213);font-weight:bold;">EN</span>
<span class="t" style="left:139.60px;top:1009.84px;font-size:12px;color:#fff;transform:scaleX(0.9765);">Rundung:</span>
<span class="t" style="left:193.70px;top:1009.84px;font-size:12px;color:#fff;transform:scaleX(0.9084);font-weight:bold;">Metrisch</span>
<span class="t" style="left:255.50px;top:1009.84px;font-size:12px;color:#fff;transform:scaleX(0.9786);">Darstellungseinheiten:</span>
<span class="t" style="left:374.30px;top:1009.84px;font-size:12px;color:#fff;transform:scaleX(0.9165);font-weight:bold;">Metrisch</span>
<span class="t" style="left:10.00px;top:78.34px;font-size:12px;color:#fff;transform:scaleX(0.9363);">Detail1</span>
<span class="t" style="left:86.00px;top:106.84px;font-size:12px;color:#1c1c1c;transform:scaleX(0.9537);">Neu</span>
<span class="t" style="left:118.00px;top:106.84px;font-size:12px;color:#1c1c1c;transform:scaleX(0.9779);">Kopieren</span>
<span class="t" style="left:175.00px;top:106.84px;font-size:12px;color:#1c1c1c;">Zurück</span>
<span class="t" style="left:217.00px;top:106.84px;font-size:12px;color:#c6c6c6;transform:scaleX(1.0124);">Nochmals</span>
<span class="t" style="left:276.00px;top:106.84px;font-size:12px;color:#1c1c1c;transform:scaleX(0.9619);">Speichern</span>
<span class="t" style="left:338.00px;top:104.84px;font-size:12px;color:#1c1c1c;transform:scaleX(0.9772);">Kantennamen</span>
<span class="t" style="left:416.00px;top:104.84px;font-size:12px;color:#1c1c1c;">Bemaßung</span>
<span class="t" style="left:483.00px;top:104.84px;font-size:12px;color:#1c1c1c;transform:scaleX(0.9681);">Bewehrungsstäbe</span>
<span class="t" style="left:580.00px;top:104.84px;font-size:12px;color:#1c1c1c;transform:scaleX(0.9055);">Raster</span>
<span class="t" style="left:627.00px;top:106.84px;font-size:12px;color:#1c1c1c;">Neu</span>
<span class="t" style="left:659.00px;top:106.84px;font-size:12px;color:#1c1c1c;transform:scaleX(0.9302);">Galerie</span>
<span class="t" style="left:705.00px;top:106.84px;font-size:12px;color:#1c1c1c;transform:scaleX(0.9853);">Einstellungen</span>
<span class="t" style="left:781.00px;top:106.84px;font-size:12px;color:#c6c6c6;">Berechnung</span>
<span class="t" style="left:855.00px;top:106.84px;font-size:12px;color:#1c1c1c;transform:scaleX(0.9426);">Erstellen</span>
<span class="t" style="left:904.00px;top:106.84px;font-size:12px;color:#1c1c1c;">Anwenden</span>
<span class="t" style="left:990.50px;top:74.84px;font-size:12px;color:#1c1c1c;transform:scaleX(0.9823);">Manager</span>
<span class="t" style="left:990.00px;top:98.84px;font-size:12px;color:#1c1c1c;transform:scaleX(0.9526);">Speichern</span>
<span class="t" style="left:990.00px;top:122.84px;font-size:12px;color:#1c1c1c;transform:scaleX(1.0329);">Öffnen</span>
<span class="t" style="left:1053.50px;top:106.84px;font-size:12px;color:#1c1c1c;transform:scaleX(0.9668);">Bauteil</span>
<span class="t" style="left:1095.00px;top:106.84px;font-size:12px;color:#c6c6c6;transform:scaleX(0.9776);">Operation</span>
<span class="t" style="left:1152.00px;top:106.84px;font-size:12px;color:#1c1c1c;transform:scaleX(0.9727);">Lastfall</span>
<span class="t" style="left:1194.00px;top:106.84px;font-size:12px;color:#1c1c1c;transform:scaleX(1.0267);">Kombination</span>
<span class="t" style="left:1268.00px;top:106.84px;font-size:12px;color:#1c1c1c;transform:scaleX(0.9799);">Bewehrung</span>
<span class="t" style="left:1342.00px;top:106.84px;font-size:12px;color:#c6c6c6;transform:scaleX(0.8333);">DXF</span>
<span class="t" style="left:1334.00px;top:121.84px;font-size:12px;color:#c6c6c6;transform:scaleX(1.0582);">Import</span>
<span class="t" style="left:40.00px;top:146.84px;font-size:12px;color:#1c1c1c;">Projektpositionen</span>
<span class="t" style="left:237.00px;top:146.84px;font-size:12px;color:#1c1c1c;transform:scaleX(0.9363);">Daten</span>
<span class="t" style="left:366.00px;top:146.84px;font-size:12px;color:#1c1c1c;">Beschriftungen</span>
<span class="t" style="left:523.00px;top:146.84px;font-size:12px;color:#1c1c1c;transform:scaleX(0.9792);">Anzeigen</span>
<span class="t" style="left:643.00px;top:146.84px;font-size:12px;color:#1c1c1c;transform:scaleX(0.9785);">Bilder</span>
<span class="t" style="left:743.00px;top:146.84px;font-size:12px;color:#1c1c1c;">Berechnung</span>
<span class="t" style="left:927.00px;top:146.84px;font-size:12px;color:#1c1c1c;transform:scaleX(0.9705);">Vorlagen</span>
<span class="t" style="left:1201.00px;top:146.84px;font-size:12px;color:#1c1c1c;">Neu</span>
<span class="t" style="left:1340.20px;top:83.90px;font-size:15px;color:#c9c9c9;transform:scaleX(0.7333);">DXF</span>
<span class="t" style="left:11.00px;top:195.84px;font-size:12px;color:#111;transform:scaleX(1.0175);font-weight:bold;">Nichtkonformitäten:</span>
<span class="t" style="left:37.00px;top:213.84px;font-size:12px;color:#222;">Im Modell ist keine Bewehrung definiert,...</span>
<span class="t" style="left:521.64px;top:501.39px;font-size:11px;color:#000">[1]</span>
<span class="t" style="left:546.39px;top:688.09px;font-size:11px;color:#000">[2]</span>
<span class="t" style="left:918.99px;top:676.39px;font-size:11px;color:#000">[3]</span>
<span class="t" style="left:895.39px;top:489.89px;font-size:11px;color:#000">[4]</span>
<span class="t" style="left:702.64px;top:666.89px;font-size:11px;color:#ee6a1e">[5]</span>
<span class="t" style="left:702.39px;top:384.09px;font-size:11px;color:#000">[6]</span>
<span class="t" style="left:50.20px;top:904.59px;font-size:12.3px;color:#111;transform:scaleX(0.8796);">Z</span>
<span class="t" style="left:68.00px;top:920.39px;font-size:12.3px;color:#111;transform:scaleX(0.8069);">Y</span>
<span class="t" style="left:82.30px;top:946.59px;font-size:12.3px;color:#111;transform:scaleX(0.8069);">X</span>
<span class="t" style="left:1249.40px;top:294.59px;font-size:12px;color:#2b2b2b;transform:scaleX(0.9807);font-weight:bold;">Detail1</span>
<span class="t" style="left:1270.60px;top:316.74px;font-size:12px;color:#2b2b2b;transform:scaleX(0.9726);font-weight:bold;">Bauteile</span>
<span class="t" style="left:1270.60px;top:338.34px;font-size:12px;color:#333;transform:scaleX(0.8410);">BB 1</span>
<span class="t" style="left:1270.60px;top:360.44px;font-size:12px;color:#2b2b2b;font-weight:bold;">Auflager</span>
<span class="t" style="left:1270.60px;top:382.74px;font-size:12px;color:#fff;transform:scaleX(0.7672);">SS1</span>
<span class="t" style="left:1270.60px;top:404.59px;font-size:12px;color:#2b2b2b;font-weight:bold;">Komponenten übe...</span>
<span class="t" style="left:1270.60px;top:426.44px;font-size:12px;color:#333;transform:scaleX(0.9413);">Fussplatte1</span>
<span class="t" style="left:1270.00px;top:448.34px;font-size:12px;color:#333;transform:scaleX(0.9426);">AN1</span>
<span class="t" style="left:1270.00px;top:470.34px;font-size:12px;color:#333;transform:scaleX(0.9640);">AN2</span>
<span class="t" style="left:1270.00px;top:492.34px;font-size:12px;color:#333;transform:scaleX(0.9640);">AN3</span>
<span class="t" style="left:1270.00px;top:514.34px;font-size:12px;color:#333;transform:scaleX(0.9854);">AN4</span>
<span class="t" style="left:1270.60px;top:536.74px;font-size:12px;color:#2b2b2b;transform:scaleX(0.9707);font-weight:bold;">Lasten und Kombin...</span>
<span class="t" style="left:1291.00px;top:558.59px;font-size:12px;color:#2b2b2b;transform:scaleX(0.9597);font-weight:bold;">Lastfälle</span>
<span class="t" style="left:1291.00px;top:580.44px;font-size:12px;color:#333;transform:scaleX(0.7959);">LE1</span>
<span class="t" style="left:1291.00px;top:602.74px;font-size:12px;color:#2b2b2b;transform:scaleX(0.9855);font-weight:bold;">GZT Kombinationen</span>
<span class="t" style="left:1313.50px;top:626.09px;font-size:12px;color:#333;transform:scaleX(0.7725);">LE1</span>
<span class="t" style="left:1440.00px;top:170.84px;font-size:12px;color:#fff;transform:scaleX(0.8818);font-weight:bold;">SS1</span>
<span class="t" style="left:1471.00px;top:170.84px;font-size:12px;color:#fff;transform:scaleX(1.0319);">[Auflager]</span>
<span class="t" style="left:1740.00px;top:170.84px;font-size:12px;color:#fff;transform:scaleX(1.0141);font-weight:bold;">Neu</span>
<span class="t" style="left:1783.00px;top:170.84px;font-size:12px;color:#fff;transform:scaleX(0.9804);font-weight:bold;">Kopieren</span>
<span class="t" style="left:1854.00px;top:170.84px;font-size:12px;color:#fff;transform:scaleX(0.9124);font-weight:bold;">Löschen</span>
<span class="t" style="left:1464.00px;top:203.84px;font-size:12px;color:#2b2b2b;transform:scaleX(0.9775);font-weight:bold;">Oberflächenlagerung</span>
<span class="t" style="left:1464.00px;top:230.84px;font-size:12px;color:#333;transform:scaleX(1.0139);">Richtung</span>
<span class="t" style="left:1583.00px;top:228.84px;font-size:12px;color:#333;transform:scaleX(0.9763);">Lokal</span>
<span class="t" style="left:1626.00px;top:228.84px;font-size:12px;color:#333;transform:scaleX(0.9804);">Global</span>
<span class="t" style="left:1464.00px;top:252.54px;font-size:12px;color:#333;transform:scaleX(0.8772);">X</span>
<span class="t" style="left:1622.00px;top:252.64px;font-size:12px;color:#111;transform:scaleX(0.9009);">8</span>
<span class="t" style="left:1851.60px;top:251.94px;font-size:12px;color:#444;transform:scaleX(1.1126);">MN/m/m</span>
<span class="t" style="left:1903.00px;top:251.35px;font-size:7.5px;color:#444;transform:scaleX(0.9610);">2</span>
<span class="t" style="left:1464.00px;top:276.54px;font-size:12px;color:#333;transform:scaleX(0.8772);">Y</span>
<span class="t" style="left:1622.00px;top:276.64px;font-size:12px;color:#111;transform:scaleX(0.9009);">8</span>
<span class="t" style="left:1851.60px;top:275.94px;font-size:12px;color:#444;transform:scaleX(1.1126);">MN/m/m</span>
<span class="t" style="left:1903.00px;top:275.35px;font-size:7.5px;color:#444;transform:scaleX(0.9610);">2</span>
<span class="t" style="left:1464.00px;top:300.54px;font-size:12px;color:#333;transform:scaleX(0.9563);">Z</span>
<span class="t" style="left:1622.00px;top:300.64px;font-size:12px;color:#111;transform:scaleX(0.9009);">40</span>
<span class="t" style="left:1851.60px;top:299.94px;font-size:12px;color:#444;transform:scaleX(1.1126);">MN/m/m</span>
<span class="t" style="left:1903.00px;top:299.35px;font-size:7.5px;color:#444;transform:scaleX(0.9610);">2</span>
<span class="t" style="left:1464.00px;top:335.34px;font-size:12px;color:#2b2b2b;transform:scaleX(0.9294);font-weight:bold;">Position</span>
<span class="t" style="left:1464.00px;top:360.84px;font-size:12px;color:#333;transform:scaleX(1.0300);">Haupt</span>
<span class="t" style="left:1581.00px;top:360.34px;font-size:12px;color:#111;transform:scaleX(0.8065);">BB 1</span>
<span class="t" style="left:1464.00px;top:384.84px;font-size:12px;color:#333;">Oberfläche</span>
<span class="t" style="left:1581.00px;top:384.34px;font-size:12px;color:#111;transform:scaleX(0.9009);">5</span>
<span class="t" style="left:1464.00px;top:408.84px;font-size:12px;color:#333;transform:scaleX(0.9737);">Geometrischer Typ</span>
<span class="t" style="left:1581.00px;top:408.34px;font-size:12px;color:#111;transform:scaleX(0.9237);">Ganze Fläche</span>
<span class="t" style="left:1668.30px;top:872.83px;font-size:23px;color:#c6c6c6;transform:scaleX(0.8339);font-weight:bold;">?</span>
</div>
<div class="L" id="s1">
<div class="b" style="left:1586px;top:291px;width:27px;height:29px;background:#fff;"></div>
<svg style="left:1594px;top:296px" width="18" height="20" viewBox="1594 296 18 20" fill="none" stroke="#111" stroke-width="1"><path d="M1602.400 298.400L1598.100 304.300H1606.700ZM1602.400 304.300V314"/><path d="M1602.400 305.800L1600.200 313.800L1602.400 311.800L1604.600 313.800Z" fill="#111" stroke-width="0.600"/></svg>
<div class="b" style="left:1613.5px;top:240.5px;width:40.5px;height:81.30000000000001px;box-sizing:border-box;border:4px solid #ee3a3e;border-radius:5.500px;box-shadow:0 1px 2px rgba(0,0,0,0.35)"></div>
<div class="b" style="left:1584.2px;top:288.3px;width:29.799999999999955px;height:33.5px;box-sizing:border-box;border:4px solid #ee3a3e;border-radius:5.500px;box-shadow:0 1px 2px rgba(0,0,0,0.35)"></div>
<div class="b" style="left:1815.1px;top:238.1px;width:43.100000000000136px;height:86.20000000000002px;box-sizing:border-box;border:4px solid #ee3a3e;border-radius:5.500px;box-shadow:0 1px 2px rgba(0,0,0,0.35)"></div>
<svg style="left:1391px;top:325px" width="470" height="171" viewBox="1391 325 470 171"><polygon points="1602,327.500 1647.500,418 1590,418" fill="#ff0000"/><rect x="1391" y="417.300" width="469" height="77.700" fill="#ff0000"/><rect x="1391" y="494.500" width="469" height="1" fill="#b04040" opacity="0.600"/></svg>
<div class="b" style="left:1211.7px;top:372.79999999999995px;width:36.200px;height:36.200px;border-radius:50%;background:#ee3a3e;box-shadow:0 1px 1.500px rgba(0,0,0,0.3)"></div>
<div class="b" style="left:1542.4px;top:318.9px;width:36.200px;height:36.200px;border-radius:50%;background:#ee3a3e;box-shadow:0 1px 1.500px rgba(0,0,0,0.3)"></div>
<div class="b" style="left:1817.3000000000002px;top:193.9px;width:36.200px;height:36.200px;border-radius:50%;background:#ee3a3e;box-shadow:0 1px 1.500px rgba(0,0,0,0.3)"></div>
<div class="b" style="left:1615.6000000000001px;top:195.6px;width:36.200px;height:36.200px;border-radius:50%;background:#ee3a3e;box-shadow:0 1px 1.500px rgba(0,0,0,0.3)"></div>
<svg style="left:1556px;top:617px" width="14" height="21" viewBox="0 0 14 21"><path d="M1 1V16.500L4.700 13L7.500 19.500L9.800 18.500L7 12.200H12Z" fill="#fff" stroke="#000" stroke-width="1"/></svg>
</div>
<div class="L X" id="t{i}">
<span class="t" style="left:1405.70px;top:428.31px;font-size:24.2px;color:#fff;text-shadow:0 0.5px 1px rgba(0,0,0,0.25);">Grau: Zugkräfte werden nicht übertragen</span>
<span class="t" style="left:1433.70px;top:455.51px;font-size:24.2px;color:#fff;text-shadow:0 0.5px 1px rgba(0,0,0,0.25);">Weiß: Zugkräfte werden übertragen</span>
<span class="t" style="left:1223.13px;top:379.28px;font-size:24px;font-weight:bold;color:#fff;text-shadow:0 1px 1.500px rgba(0,0,0,0.35)">1</span>
<span class="t" style="left:1553.83px;top:325.38px;font-size:24px;font-weight:bold;color:#fff;text-shadow:0 1px 1.500px rgba(0,0,0,0.35)">2</span>
<span class="t" style="left:1828.73px;top:200.38px;font-size:24px;font-weight:bold;color:#fff;text-shadow:0 1px 1.500px rgba(0,0,0,0.35)">3</span>
<span class="t" style="left:1627.03px;top:202.08px;font-size:24px;font-weight:bold;color:#fff;text-shadow:0 1px 1.500px rgba(0,0,0,0.35)">4</span>
</div>
</body></html>
